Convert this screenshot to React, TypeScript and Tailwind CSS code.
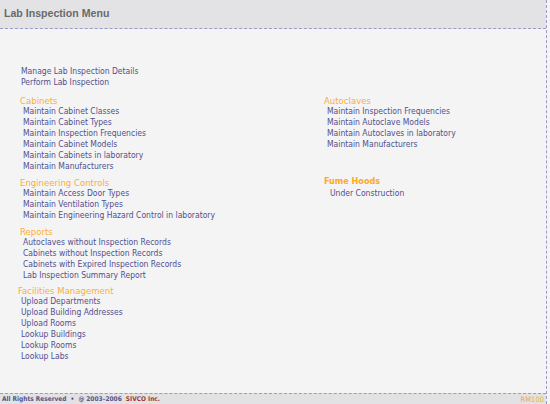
import React from "react";

const linkCls = "block h-[11px] leading-[11px] text-[8.5px] text-[#50508f] whitespace-nowrap";
const headCls = "block h-[11px] leading-[11px] text-[9.5px] text-[#ffad33] whitespace-nowrap";

function Section({ title, items, hx, ix, mt }: { title: string; items: string[]; hx: string; ix: string; mt: string }) {
  return (
    <div className={mt}>
      <div className={`${headCls} ${hx}`}>{title}</div>
      {items.map((t) => (
        <a key={t} className={`${linkCls} ${ix}`}>{t}</a>
      ))}
    </div>
  );
}

export default function App() {
  return (
    <div
      className="w-[550px] h-[404px] flex flex-col bg-[#f4f4f4] overflow-hidden"
      style={{ fontFamily: '"DejaVu Sans Condensed", "DejaVu Sans", sans-serif' }}
    >
      <div className="w-[547px] h-[404px] flex flex-col border-r border-dashed border-[#9a9acc]">
        <div className="h-[29px] shrink-0 bg-[#e3e3e6] border-b border-dashed border-[#9a9acc] flex items-start">
          <div
            className="pl-[4px] pt-[6px] text-[10.6px] font-bold text-[#6a6a6a] leading-[14px]"
            style={{ fontFamily: '"Liberation Sans", Arial, sans-serif' }}
          >
            Lab Inspection Menu
          </div>
        </div>
        <div className="flex-1 pt-[37px]">
          <div className="pl-[21px]">
            <a className={linkCls}>Manage Lab Inspection Details</a>
            <a className={linkCls}>Perform Lab Inspection</a>
          </div>
          <div className="flex mt-[7px]">
            <div className="w-[324px] pl-[20px]">
              <Section
                title="Cabinets"
                hx=""
                ix="pl-[3px]"
                mt=""
                items={[
                  "Maintain Cabinet Classes",
                  "Maintain Cabinet Types",
                  "Maintain Inspection Frequencies",
                  "Maintain Cabinet Models",
                  "Maintain Cabinets in laboratory",
                  "Maintain Manufacturers",
                ]}
              />
              <Section
                title="Engineering Controls"
                hx=""
                ix="pl-[3px]"
                mt="mt-[5px]"
                items={[
                  "Maintain Access Door Types",
                  "Maintain Ventilation Types",
                  "Maintain Engineering Hazard Control in laboratory",
                ]}
              />
              <Section
                title="Reports"
                hx=""
                ix="pl-[3px]"
                mt="mt-[5px]"
                items={[
                  "Autoclaves without Inspection Records",
                  "Cabinets without Inspection Records",
                  "Cabinets with Expired Inspection Records",
                  "Lab Inspection Summary Report",
                ]}
              />
              <Section
                title="Facilities Management"
                hx="-ml-[2px]"
                ix="pl-[1px]"
                mt="mt-[4px]"
                items={[
                  "Upload Departments",
                  "Upload Building Addresses",
                  "Upload Rooms",
                  "Lookup Buildings",
                  "Lookup Rooms",
                  "Lookup Labs",
                ]}
              />
            </div>
            <div className="flex-1">
              <Section
                title="Autoclaves"
                hx=""
                ix="pl-[3px]"
                mt=""
                items={[
                  "Maintain Inspection Frequencies",
                  "Maintain Autoclave Models",
                  "Maintain Autoclaves in laboratory",
                  "Maintain Manufacturers",
                ]}
              />
              <div className="mt-[26px]">
                <div className="h-[11px] leading-[11px] text-[9px] font-bold text-[#ffa726] whitespace-nowrap">Fume Hoods</div>
                <a className={`${linkCls} pl-[6px] mt-[1px]`}>Under Construction</a>
              </div>
            </div>
          </div>
        </div>
        <div className="h-[11px] shrink-0 bg-[#e2e2e4] border-t border-dashed border-[#9a9acc] flex items-center justify-between pl-[2px] pr-[2px]">
          <div className="text-[6.5px] font-bold text-[#55558a] leading-[9px] whitespace-nowrap">
            All Rights Reserved&nbsp; •&nbsp; @ 2003–2006&nbsp; <span className="text-[#a03a3a]">SIVCO Inc.</span>
          </div>
          <div className="text-[7.5px] text-[#f0b030] leading-[9px]">RM100</div>
        </div>
      </div>
    </div>
  );
}
